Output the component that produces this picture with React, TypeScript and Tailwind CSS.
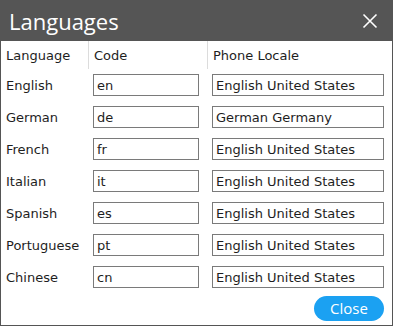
import React from 'react';

const rows = [
  { lang: 'English', code: 'en', locale: 'English United States' },
  { lang: 'German', code: 'de', locale: 'German Germany' },
  { lang: 'French', code: 'fr', locale: 'English United States' },
  { lang: 'Italian', code: 'it', locale: 'English United States' },
  { lang: 'Spanish', code: 'es', locale: 'English United States' },
  { lang: 'Portuguese', code: 'pt', locale: 'English United States' },
  { lang: 'Chinese', code: 'cn', locale: 'English United States' },
];

const body = { fontFamily: 'Tahoma, "DejaVu Sans", Verdana, sans-serif' };

export default function App() {
  return (
    <div className="w-[393px] h-[326px] bg-white flex flex-col">
      {/* Title bar */}
      <div
        className="h-[41px] bg-[#555555] flex items-center justify-between pl-[9px] pr-[15px] shrink-0"
      >
        <span className="text-white text-[22px] leading-none" style={{ fontFamily: '"Open Sans", "Noto Sans", sans-serif' }}>
          Languages
        </span>
        <svg width="16" height="16" viewBox="0 0 16 16" className="mt-[1px]">
          <path d="M1.5 1.5 L14.5 14.5 M14.5 1.5 L1.5 14.5" stroke="#ffffff" strokeWidth="1.6" fill="none" />
        </svg>
      </div>

      <div className="flex-1 border-x border-b border-[#555555] flex flex-col text-[13px] text-[#1e1e1e]" style={body}>
        <div className="grid grid-cols-[88px_119px_1fr]">
          <div className="h-[28px] flex items-center pl-[5px] pt-[1px] border-r border-[#dcdcdc]">Language</div>
          <div className="h-[28px] flex items-center pl-[5px] pt-[1px] border-r border-[#dcdcdc]">Code</div>
          <div className="h-[28px] flex items-center pl-[5px] pt-[1px]">Phone Locale</div>

          {rows.map((r) => (
            <React.Fragment key={r.lang}>
              <div className="h-[32px] flex items-center pl-[5px] pt-[1px]">{r.lang}</div>
              <div className="h-[32px] flex items-center pl-[4px]">
                <div className="w-[106px] h-[22px] border border-[#7a7a7a] flex items-center pl-[3px] pt-[1px]">{r.code}</div>
              </div>
              <div className="h-[32px] flex items-center pl-[4px]">
                <div className="w-[172px] h-[22px] border border-[#7a7a7a] flex items-center pl-[3px] pt-[1px]">{r.locale}</div>
              </div>
            </React.Fragment>
          ))}
        </div>

        <div className="flex justify-end pr-[8px] pt-[3px]">
          <button
            className="w-[70px] h-[25px] rounded-full bg-[#1ba1f2] text-white text-[15px] leading-none pb-[1px]"
            style={{ fontFamily: '"Open Sans", "Noto Sans", sans-serif' }}
          >
            Close
          </button>
        </div>
      </div>
    </div>
  );
}
